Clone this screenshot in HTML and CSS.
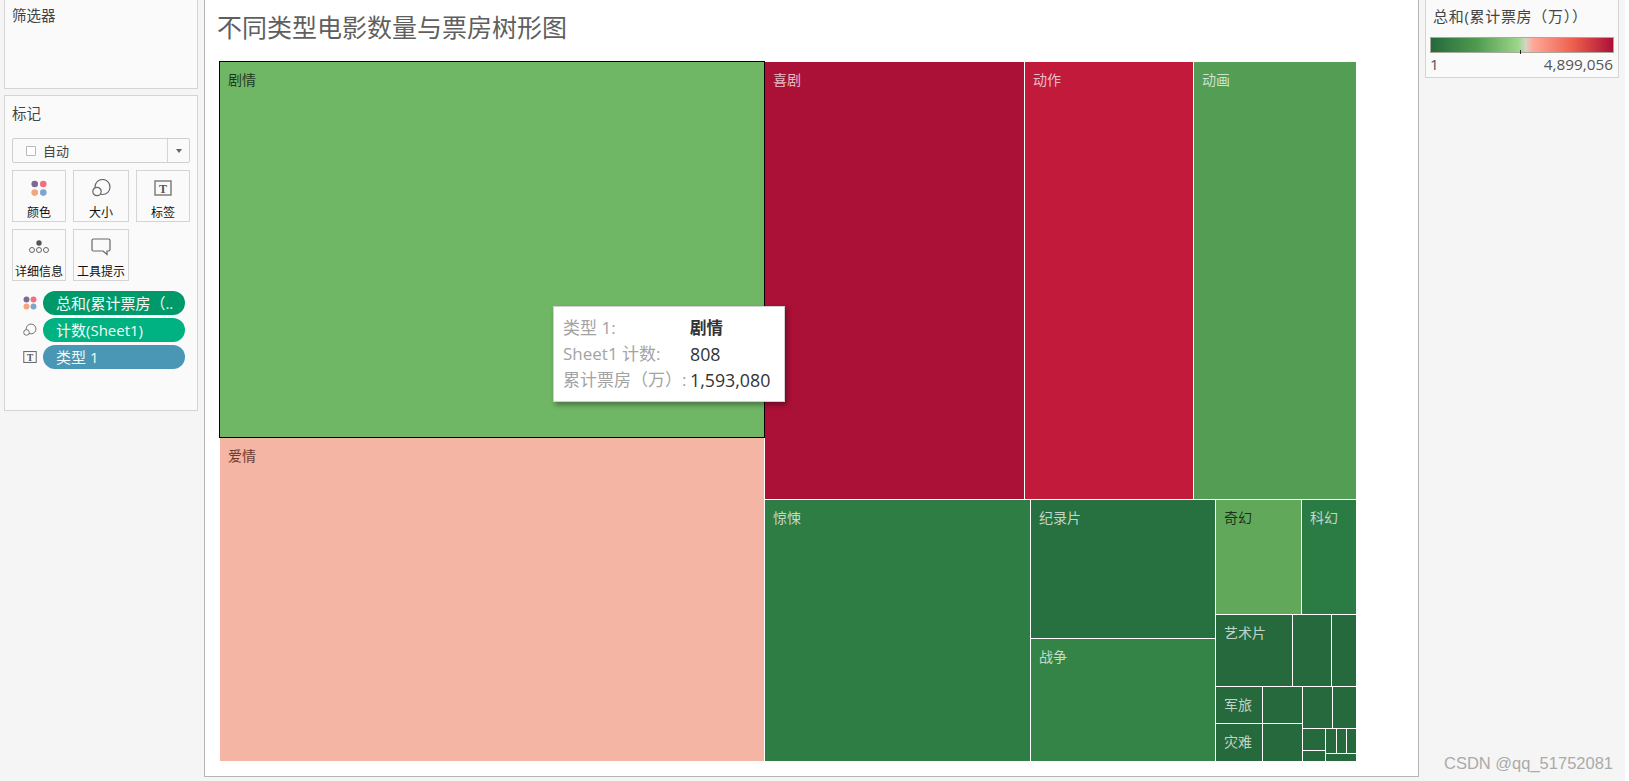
FILE: index.html
```html
<!DOCTYPE html>
<html lang="zh-CN">
<head>
<meta charset="utf-8">
<title>不同类型电影数量与票房树形图</title>
<link rel="stylesheet" href="styles.css">
</head>
<body>
<div class="frame">
  <aside class="sidebar">
    <section class="card filters"><h2 class="card-title">筛选器</h2></section>
    <section class="card marks">
      <h2 class="card-title marks-title">标记</h2>
      <div class="select">
        <div class="select-value"><span class="check"></span><span>自动</span></div>
        <div class="select-caret"><span class="caret"></span></div>
      </div>
      <div class="mark-grid">
        <div class="mark-btn">
          <svg class="mark-icon" width="18" height="18" viewBox="0 0 18 18"><circle cx="4.700" cy="5" r="3.300" fill="#7b6a94"/><circle cx="13.300" cy="5" r="3.300" fill="#f0707f"/><circle cx="4.700" cy="13.600" r="3.300" fill="#f4a57e"/><circle cx="13.300" cy="13.600" r="3.300" fill="#7fa5cf"/></svg>
          <span>颜色</span>
        </div>
        <div class="mark-btn">
          <svg class="mark-icon" width="20" height="18" viewBox="0 0 20 18"><circle cx="11.500" cy="8" r="7.500" fill="none" stroke="#666" stroke-width="1.200"/><circle cx="6" cy="12.500" r="4.200" fill="#fafafa" stroke="#666" stroke-width="1.200"/></svg>
          <span>大小</span>
        </div>
        <div class="mark-btn">
          <svg class="mark-icon" width="18" height="18" viewBox="0 0 18 18"><rect x="1" y="2" width="16" height="14" fill="none" stroke="#777" stroke-width="1.400"/><text x="9" y="13.500" text-anchor="middle" class="t-glyph">T</text></svg>
          <span>标签</span>
        </div>
        <div class="mark-btn">
          <svg class="mark-icon" width="22" height="18" viewBox="0 0 22 18"><circle cx="11" cy="5" r="2.700" fill="#555"/><circle cx="4" cy="12" r="2.500" fill="none" stroke="#666"/><circle cx="11" cy="12" r="2.500" fill="none" stroke="#666"/><circle cx="18" cy="12" r="2.500" fill="none" stroke="#666"/></svg>
          <span>详细信息</span>
        </div>
        <div class="mark-btn">
          <svg class="mark-icon" width="20" height="18" viewBox="0 0 20 18"><path d="M2.500 1h15a1.500 1.500 0 0 1 1.500 1.500v9a1.500 1.500 0 0 1-1.500 1.500H16v3.500L12 13H2.500A1.500 1.500 0 0 1 1 11.500v-9A1.500 1.500 0 0 1 2.500 1z" fill="none" stroke="#666" stroke-width="1.200"/></svg>
          <span>工具提示</span>
        </div>
      </div>
      <div class="pills">
        <div class="pill-row">
          <svg width="14" height="14" viewBox="0 0 18 18"><circle cx="4.500" cy="4.500" r="3.800" fill="#7b6a94"/><circle cx="13.500" cy="4.500" r="3.800" fill="#f0707f"/><circle cx="4.500" cy="13.500" r="3.800" fill="#f4a57e"/><circle cx="13.500" cy="13.500" r="3.800" fill="#7fa5cf"/></svg>
          <div class="pill pill-color">总和(累计票房（..</div>
        </div>
        <div class="pill-row">
          <svg width="14" height="14" viewBox="0 0 20 18"><circle cx="11.500" cy="7.500" r="7" fill="none" stroke="#666" stroke-width="1.300"/><circle cx="5" cy="12.500" r="4" fill="#fafafa" stroke="#666" stroke-width="1.300"/></svg>
          <div class="pill pill-size">计数(Sheet1)</div>
        </div>
        <div class="pill-row">
          <svg width="14" height="14" viewBox="0 0 18 18"><rect x="1" y="2" width="16" height="14" fill="none" stroke="#666" stroke-width="1.300"/><text x="9" y="13.500" text-anchor="middle" class="t-glyph">T</text></svg>
          <div class="pill pill-label">类型 1</div>
        </div>
      </div>
    </section>
  </aside>

  <main class="sheet">
    <h1 class="sheet-title">不同类型电影数量与票房树形图</h1>
    <div class="treemap">
      <div class="col" style="width:544px">
        <div class="cell c-drama selected dk" style="height:375px">剧情</div>
        <div class="cell c-romance dk2 grow">爱情</div>
      </div>
      <div class="col grow">
        <div class="row" style="height:437px">
          <div class="cell c-comedy lt" style="width:259px">喜剧</div>
          <div class="cell c-action lt" style="width:168px">动作</div>
          <div class="cell c-anim lt grow">动画</div>
        </div>
        <div class="row grow">
          <div class="cell c-thriller lt" style="width:265px">惊悚</div>
          <div class="col" style="width:184px">
            <div class="cell c-doc lt" style="height:138px">纪录片</div>
            <div class="cell c-war lt grow">战争</div>
          </div>
          <div class="col grow">
            <div class="row" style="height:114px">
              <div class="cell c-fantasy dk" style="width:85px">奇幻</div>
              <div class="cell c-scifi lt grow">科幻</div>
            </div>
            <div class="row" style="height:71px">
              <div class="cell c-small lt" style="width:76px">艺术片</div>
              <div class="cell c-small" style="width:38px"></div>
              <div class="cell c-small grow"></div>
            </div>
            <div class="row grow">
              <div class="col" style="width:86px">
                <div class="row" style="height:36px">
                  <div class="cell c-small lt" style="width:46px">军旅</div>
                  <div class="cell c-small grow"></div>
                </div>
                <div class="row grow">
                  <div class="cell c-small lt" style="width:46px">灾难</div>
                  <div class="cell c-small grow"></div>
                </div>
              </div>
              <div class="col grow">
                <div class="row" style="height:41px">
                  <div class="cell c-small" style="width:29px"></div>
                  <div class="cell c-small grow"></div>
                </div>
                <div class="row grow">
                  <div class="col" style="width:22px">
                    <div class="cell c-small" style="height:21px"></div>
                    <div class="cell c-small grow"></div>
                  </div>
                  <div class="col grow">
                    <div class="row" style="height:24px">
                      <div class="cell c-small" style="width:10px"></div>
                      <div class="cell c-small" style="width:9px"></div>
                      <div class="cell c-small grow"></div>
                    </div>
                    <div class="cell c-small grow"></div>
                  </div>
                </div>
              </div>
            </div>
          </div>
        </div>
      </div>
    </div>
    <div class="tooltip">
      <span class="tip-key">类型 1:</span><strong class="tip-val">剧情</strong>
      <span class="tip-key">Sheet1 计数:</span><span class="tip-val">808</span>
      <span class="tip-key">累计票房（万）:</span><span class="tip-val">1,593,080</span>
    </div>
  </main>

  <aside class="legend-col">
    <section class="legend">
      <h2 class="legend-title">总和(累计票房（万））</h2>
      <div class="ramp"><span class="ramp-tick"></span></div>
      <div class="ramp-labels"><span>1</span><span>4,899,056</span></div>
    </section>
  </aside>
  <div class="watermark">CSDN @qq_51752081</div>
</div>
</body>
</html>
```
FILE: styles.css
```css
* { box-sizing: border-box; }
html, body { margin: 0; height: 100%; }
body {
  background: #fff;
  overflow: hidden;
  font-family: "Open Sans", "Noto Sans CJK SC", sans-serif;
  color: #333;
}
h1, h2 { margin: 0; font-weight: 400; }

.frame {
  position: relative;
  display: flex;
  align-items: flex-start;
  width: 1625px;
  height: 781px;
  background: #f5f5f5;
}

/* sidebar */
.sidebar {
  flex: none;
  width: 204px;
  padding-left: 4px;
  display: flex;
  flex-direction: column;
  gap: 6px;
}
.card {
  width: 194px;
  background: #fafafa;
  border: 1px solid #d4d4d4;
  padding: 0 7px;
}
.filters { height: 89px; border-top: 0; padding-top: 6px; }
.marks { height: 316px; padding-top: 8px; }
.card-title { font-size: 14.500px; line-height: 20px; color: #444; }
.marks-title { margin-bottom: 14px; }

.select {
  display: flex;
  height: 25px;
  border: 1px solid #cfcfcf;
  border-radius: 2px;
  background: #fafafa;
}
.select-value {
  flex: 1;
  display: flex;
  align-items: center;
  gap: 7px;
  padding-left: 13px;
  font-size: 13px;
  color: #444;
}
.check {
  width: 10px;
  height: 10px;
  border: 1px solid #b8b8b8;
  background: #fff;
  border-radius: 1px;
}
.select-caret {
  flex: none;
  width: 22px;
  border-left: 1px solid #d4d4d4;
  display: flex;
  align-items: center;
  justify-content: center;
}
.caret {
  width: 0;
  height: 0;
  border-left: 3.500px solid transparent;
  border-right: 3.500px solid transparent;
  border-top: 4px solid #666;
}

.mark-grid {
  display: grid;
  grid-template-columns: 54px 56px 54px;
  grid-auto-rows: 52px;
  gap: 7px;
  margin-top: 7px;
}
.mark-btn {
  display: flex;
  flex-direction: column;
  align-items: center;
  border: 1px solid #d4d4d4;
  padding-top: 8px;
  font-size: 12px;
  line-height: 18px;
  color: #111;
  white-space: nowrap;
}
.mark-icon { display: block; margin-bottom: 7px; flex: none; }
.t-glyph {
  font-family: "Liberation Serif", serif;
  font-weight: 700;
  font-size: 12px;
  fill: #555;
}

.pills {
  display: flex;
  flex-direction: column;
  gap: 3px;
  margin-top: 10px;
  padding-left: 11px;
}
.pill-row { display: flex; align-items: center; gap: 6px; }
.pill-row svg { flex: none; }
.pill {
  width: 142px;
  height: 24px;
  border-radius: 12px;
  padding-left: 13px;
  color: #f2fbf7;
  font-size: 15px;
  line-height: 24px;
  white-space: nowrap;
  overflow: hidden;
}
.pill-color { background: #009a6a; }
.pill-size { background: #00b281; }
.pill-label { background: #4a96b5; }

/* sheet */
.sheet {
  position: relative;
  flex: none;
  width: 1215px;
  height: 777px;
  background: #fff;
  border: 1px solid #b5b5b5;
  border-top: 0;
  padding-left: 12px;
}
.sheet-title {
  height: 62px;
  font-size: 25px;
  line-height: 55px;
  color: #5f5f5f;
  white-space: nowrap;
}
.treemap {
  display: flex;
  gap: 1px;
  width: 1136px;
  height: 699px;
  margin-left: 3px;
}
.row, .col { display: flex; gap: 1px; min-width: 0; min-height: 0; }
.row { flex-direction: row; }
.col { flex-direction: column; }
.grow { flex: 1 1 0; }
.cell {
  padding: 7.500px 0 0 8px;
  font-size: 14px;
  line-height: 20px;
  overflow: hidden;
  white-space: nowrap;
}
.lt { color: rgba(255, 255, 255, .72); }
.dk { color: rgba(0, 0, 0, .72); }
.dk2 { color: #6b3a30; }
.selected { position: relative; outline: 1px solid #000; z-index: 1; }

.c-drama { background: #70b765; }
.c-romance { background: #f4b5a5; }
.c-comedy { background: #ab1037; }
.c-action { background: #c11a3b; }
.c-anim { background: #549d54; }
.c-thriller { background: #2d7d44; }
.c-doc { background: #27703f; }
.c-war { background: #348447; }
.c-fantasy { background: #62a85a; }
.c-scifi { background: #2b7b44; }
.c-small { background: #26693c; }

.tooltip {
  position: absolute;
  left: 348px;
  top: 306px;
  z-index: 2;
  width: 232px;
  height: 96px;
  display: grid;
  grid-template-columns: 123px auto;
  grid-auto-rows: 26px;
  column-gap: 4px;
  align-content: center;
  padding-left: 9px;
  background: #fff;
  border: 1px solid #d0d0d0;
  box-shadow: 2px 3px 5px rgba(0, 0, 0, .35);
  font-size: 17px;
  line-height: 26px;
  white-space: nowrap;
}
.tip-key { color: #a3a3a3; }
.tip-val { color: #333; font-weight: 400; font-size: 17.800px; }
strong.tip-val { font-weight: 700; font-size: 16.500px; }

/* legend */
.legend-col { flex: none; padding-left: 6px; }
.legend {
  width: 194px;
  height: 78px;
  background: #fafafa;
  border: 1px solid #d4d4d4;
  border-top: 0;
  padding: 6px 4px 0 4px;
}
.legend-title {
  padding-left: 3px;
  font-size: 15px;
  letter-spacing: .7px;
  line-height: 20px;
  color: #444;
  white-space: nowrap;
}
.ramp {
  position: relative;
  height: 16px;
  margin-top: 11px;
  border: 1px solid #a8a89c;
  background: linear-gradient(90deg, #26693c 0%, #4f9a50 25%, #9dd68a 48%, #d5d5c8 52%, #ffa898 56%, #ee5f4e 78%, #ab1037 100%);
}
.ramp-tick {
  position: absolute;
  left: 89px;
  bottom: -2px;
  width: 1px;
  height: 4px;
  background: #222;
}
.ramp-labels {
  display: flex;
  justify-content: space-between;
  padding: 0 1px 0 0;
  font-size: 15.300px;
  line-height: 22px;
  color: #555;
}

.watermark {
  position: absolute;
  left: 1444px;
  top: 752px;
  font-family: "Liberation Sans", sans-serif;
  font-size: 16.500px;
  line-height: 22px;
  color: #aaa;
  white-space: nowrap;
}
```
